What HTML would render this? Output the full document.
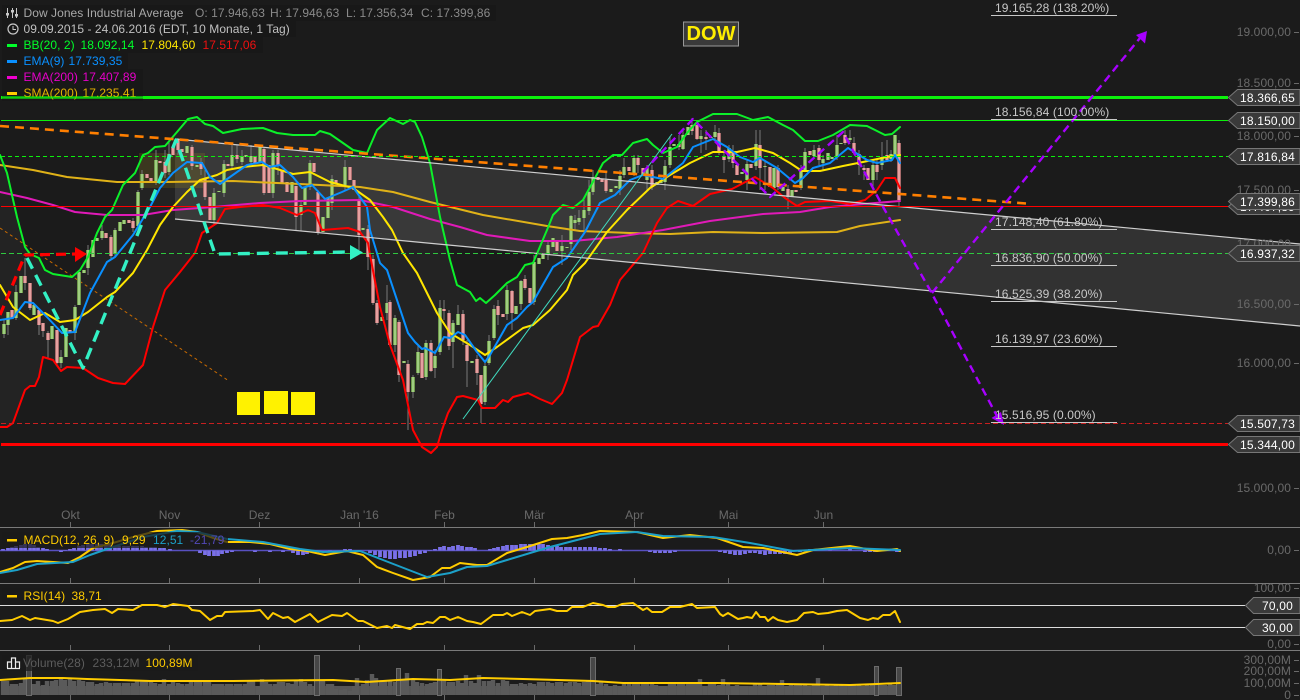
<!DOCTYPE html>
<html><head><meta charset="utf-8"><style>
html,body{margin:0;padding:0;background:#1b1b1b;width:1300px;height:700px;overflow:hidden}
svg{display:block}
text{font-family:"Liberation Sans",sans-serif;font-size:12px;letter-spacing:.05px}
.ax{fill:#6a6a6a;text-anchor:end;letter-spacing:.1px}
.dt{fill:#6a6a6a;text-anchor:middle}
.fb{fill:#c8c8c8;letter-spacing:.12px}
.lb{fill:#fff;letter-spacing:.18px}
.box{fill:#3a3a3a;stroke:#777;stroke-width:1}
.ln{fill:none;stroke-linejoin:round;stroke-linecap:round}
</style></head><body>
<svg width="1300" height="700" viewBox="0 0 1300 700" xmlns="http://www.w3.org/2000/svg">
<rect width="1300" height="700" fill="#1b1b1b"/>
<defs>
<path id="gc" d="M4 324V334M8 312V325M16 292V318M21 276V293M34 305V315M52 326V339M61 357V363M66 328V357M75 307V333M79 272V305M84 270V273M88 250V268M93 240V257M97 238V241M102 231V238M115 230V253M120 222V231M124 220V224M138 192V226M142 174V188M156 160V182M169 154V172M187 146V153M197 165V167M214 193V220M219 191V192M224 164V193M232 155V166M242 156V162M246 155V157M251 156V162M260 147V162M273 153V193M292 182V193M301 205V215M305 187V205M310 163V187M323 217V232M328 198V218M332 179V203M345 167V185M363 228V230M382 317V321M387 303V313M395 318V345M404 361V363M413 377V392M418 352V373M426 343V377M435 356V368M440 308V352M453 323V342M458 314V325M472 361V363M485 366V402M489 341V363M494 309V338M507 290V314M516 306V314M521 281V304M534 262V302M539 258V264M543 254V259M548 245V253M553 238V247M562 246V251M567 247V248M571 216V244M575 220V223M579 218V222M584 210V218M589 192V211M593 177V192M611 189V192M616 186V188M620 176V189M624 167V175M634 158V173M647 168V180M657 182V185M661 180V183M665 166V182M670 147V165M674 144V146M683 135V149M688 127V135M701 136V139M711 137V138M715 132V137M729 148V159M742 172V174M747 164V180M756 144V166M765 166V167M774 168V188M783 187V191M792 190V197M801 170V188M805 152V170M814 150V156M823 159V163M828 153V160M832 157V159M837 145V157M841 143V144M850 138V140M873 165V180M882 157V165M891 154V159M895 135V155"/>
<path id="rc" d="M12 310V318M25 276V283M30 283V308M39 310V325M43 323V331M48 333V340M57 330V363M70 330V333M106 233V238M111 237V256M129 220V223M133 221V228M147 174V178M151 178V183M160 161V163M165 162V173M173 147V155M178 140V150M182 149V152M192 147V166M201 162V169M205 178V197M210 197V220M228 164V166M237 155V159M255 157V163M264 149V193M269 165V193M278 153V165M282 170V183M287 182V192M296 186V217M314 163V172M318 192V233M336 180V184M350 167V180M354 180V190M359 200V235M368 229V257M373 259V303M377 303V323M390 302V345M399 322V375M408 364V392M422 353V378M431 343V371M444 309V311M449 313V346M463 314V340M467 345V361M477 359V373M481 375V404M498 306V315M503 314V317M512 291V313M525 279V288M530 288V303M557 240V251M598 177V180M602 179V182M606 180V191M629 167V171M638 158V165M643 168V175M652 170V187M679 144V147M692 125V131M697 125V139M706 137V139M719 133V153M724 157V160M733 152V163M737 165V175M751 164V168M760 145V168M770 167V187M778 168V187M788 189V197M796 190V192M810 151V155M819 148V160M845 135V143M854 143V153M859 154V165M864 168V170M868 168V180M877 165V172M887 155V160M899 143V200"/>
</defs>

<!-- Bollinger fill -->
<polygon fill="#232323" points="0,155 7,173 17,217 25,247 30,254 39,258 45,270 53,274 72,277 80,270 88,257 97,233 105,217 112,210 123,185 135,173 143,155 148,153 155,147 165,146 177,132 188,119 197,117 205,124 213,126 223,133 242,129 263,128 277,133 293,135 315,135 320,131 330,134 343,143 353,150 367,153 377,130 390,118 403,124 410,120 415,122 422,137 430,163 440,217 450,260 457,285 470,292 476,301 480,298 486,303 495,295 507,283 517,277 525,265 533,263 547,230 553,215 563,205 573,208 583,200 595,178 603,163 613,155 622,155 633,143 647,139 653,145 663,153 677,147 687,133 697,122 713,114 737,114 753,120 768,117 783,125 793,130 805,141 818,141 833,135 850,125 867,126 885,135 892,134 900,127 900,188 895,178 885,178 877,190 865,200 850,204 830,201 805,202 797,206 785,198 773,188 755,177 732,189 710,194 693,206 678,201 667,208 657,223 643,253 620,280 610,305 598,326 593,327 580,337 567,380 562,393 552,404 540,399 528,393 513,397 508,402 503,400 495,408 482,408 478,400 463,396 457,397 448,413 442,430 437,447 431,453 422,447 413,430 403,380 390,345 380,307 370,255 368,243 360,232 348,228 322,230 315,213 308,210 297,215 280,208 263,205 240,207 225,209 217,223 202,233 195,253 180,272 165,290 153,327 143,365 125,384 113,383 98,378 83,368 67,367 61,371 53,360 43,357 39,377 35,386 30,386 25,390 13,423 7,427 0,427"/>

<!-- channel -->
<polygon fill="#ffffff" fill-opacity="0.1" points="175,139 1300,244 1300,326 175,219"/>
<rect x="139" y="153" width="66" height="35" fill="#ffdc00" fill-opacity="0.11"/>

<!-- thin orange -->
<line x1="0" y1="228" x2="229" y2="381" stroke="#c86a00" stroke-width="1" stroke-dasharray="3 3"/>

<!-- wicks -->
<path fill="none" stroke="#7a7a7a" stroke-width="1" d="M4 320V338M8 312V335M16 285V320M25 258V290M30 283V310M39 310V335M43 323V337M48 331V358M57 330V365M61 350V368M75 305V340M88 245V275M102 225V240M111 235V260M115 228V258M133 218V232M138 190V228M142 170V190M156 150V185M165 150V178M169 140V175M178 138V155M192 145V170M201 158V175M205 170V200M214 188V225M224 160V197M232 145V170M237 145V163M242 150V165M251 145V165M264 147V195M273 150V198M278 150V175M296 186V231M301 200V231M310 160V190M318 190V235M332 175V210M345 160V190M359 195V250M368 225V270M373 255V305M377 300V325M387 285V320M390 300V346M395 315V352M399 320V382M408 360V430M413 375V398M418 345V375M426 340V380M431 340V372M435 350V378M440 300V355M444 300V320M449 310V350M453 320V368M458 305V325M463 310V345M467 340V387M477 355V385M481 375V423M485 360V405M489 335V365M494 305V340M498 300V325M507 285V320M512 290V330M521 280V310M525 275V290M534 255V305M548 240V260M562 235V265M571 215V250M575 215V230M579 210V225M584 200V230M589 180V215M593 170V195M606 172V193M620 170V195M624 158V178M634 155V176M638 155V173M647 165V190M652 165V190M665 160V190M670 136V168M679 135V150M683 128V150M692 118V135M697 120V140M701 130V153M706 130V150M715 125V140M719 128V155M724 150V173M729 145V162M733 145V168M747 160V190M756 130V170M760 130V190M765 160V190M778 165V190M788 185V209M801 165V190M805 148V172M814 145V158M819 145V165M823 155V170M837 135V160M845 130V145M850 130V142M854 137V155M859 150V175M864 165V180M873 160V190M877 160V180M882 142V170M887 140V162M891 150V162M899 140V206"/>
<!-- candles -->
<use href="#gc" fill="none" stroke="#6f9a4c" stroke-width="4"/>
<use href="#gc" fill="none" stroke="#9fce80" stroke-width="2"/>
<use href="#rc" fill="none" stroke="#a96c6c" stroke-width="4"/>
<use href="#rc" fill="none" stroke="#e6a0a0" stroke-width="2"/>

<!-- SMA200 gold -->
<polyline class="ln" stroke="#e0b218" stroke-width="2" points="0,165 33,170 67,177 117,182 167,182 233,181 300,184 360,187 393,192 430,202 483,215 547,226 580,231 630,233 670,234 713,232 763,233 837,232 860,226 900,220"/>
<!-- EMA200 magenta -->
<polyline class="ln" stroke="#e01ab8" stroke-width="2" points="0,192 27,198 53,205 75,212 107,215 143,215 173,210 213,207 260,203 300,201 360,200 393,207 430,219 460,227 487,235 530,241 573,241 617,237 663,230 710,221 763,214 800,212 830,207 863,204 900,201"/>
<!-- Upper BB -->
<polyline class="ln" stroke="#0cf02a" stroke-width="2" points="0,155 7,173 17,217 25,247 30,254 39,258 45,270 53,274 72,277 80,270 88,257 97,233 105,217 112,210 123,185 135,173 143,155 148,153 155,147 165,146 177,132 188,119 197,117 205,124 213,126 223,133 242,129 263,128 277,133 293,135 315,135 320,131 330,134 343,143 353,150 367,153 377,130 390,118 403,124 410,120 415,122 422,137 430,163 440,217 450,260 457,285 470,292 476,301 480,298 486,303 495,295 507,283 517,277 525,265 533,263 547,230 553,215 563,205 573,208 583,200 595,178 603,163 613,155 622,155 633,143 647,139 653,145 663,153 677,147 687,133 697,122 713,114 737,114 753,120 768,117 783,125 793,130 805,141 818,141 833,135 850,125 867,126 885,135 892,134 900,127"/>
<!-- Lower BB -->
<polyline class="ln" stroke="#ff0000" stroke-width="2" points="0,427 7,427 13,423 25,390 30,386 35,386 39,377 43,357 53,360 61,371 67,367 83,368 98,378 113,383 125,384 143,365 153,327 165,290 180,272 195,253 202,233 217,223 225,209 240,207 263,205 280,208 297,215 308,210 315,213 322,230 348,228 360,232 368,243 370,255 380,307 390,345 403,380 413,430 422,447 431,453 437,447 442,430 448,413 457,397 463,396 478,400 482,408 495,408 503,400 508,402 513,397 528,393 540,399 552,404 562,393 567,380 580,337 593,327 598,326 610,305 620,280 643,253 657,223 667,208 678,201 693,206 710,194 732,189 755,177 773,188 785,198 797,206 805,202 830,201 850,204 865,200 877,190 885,178 895,178 900,188"/>
<!-- Middle BB -->
<polyline class="ln" stroke="#ffe600" stroke-width="2" points="0,285 13,307 30,320 45,313 60,322 75,320 88,312 107,297 115,292 133,273 147,250 160,225 173,207 187,192 200,180 217,175 227,170 243,167 263,165 277,169 293,174 310,172 330,182 353,188 370,200 383,217 392,230 403,253 417,273 437,313 450,333 470,345 485,355 497,347 523,328 533,325 550,310 567,290 573,275 585,263 607,232 627,210 650,188 670,175 690,163 713,152 737,152 755,148 773,153 790,163 802,171 820,171 843,166 863,162 887,157 900,155"/>
<!-- EMA9 -->
<polyline class="ln" stroke="#0a90ff" stroke-width="2" points="0,320 13,318 25,302 33,303 47,317 62,333 75,332 90,293 107,262 115,257 133,235 150,207 160,188 173,173 187,162 202,163 210,177 220,184 230,177 247,165 262,162 270,167 280,165 293,177 302,188 312,185 325,199 342,192 353,187 367,207 370,230 380,263 387,270 397,300 408,333 415,342 422,349 425,348 435,353 444,337 450,338 458,332 465,335 477,352 485,362 490,355 507,325 517,318 527,307 533,302 553,267 567,258 585,232 600,203 615,195 630,180 643,175 663,179 683,163 693,147 713,139 727,147 740,157 753,162 760,158 777,168 795,183 803,178 813,168 830,163 848,148 867,160 877,163 892,160 895,155 900,163"/>

<!-- channel edges -->
<line x1="175" y1="139" x2="1300" y2="244" stroke="#cfcfcf" stroke-width="1.2"/>
<line x1="175" y1="219" x2="1300" y2="326" stroke="#cfcfcf" stroke-width="1.2"/>

<!-- orange trend -->
<line x1="0" y1="126" x2="1026" y2="203.5" stroke="#ff7f00" stroke-width="2.6" stroke-dasharray="9 6"/>

<!-- horizontal levels -->
<line x1="1" y1="97.5" x2="1228" y2="97.5" stroke="#0cf00c" stroke-width="3"/>
<line x1="1" y1="120.5" x2="1228" y2="120.5" stroke="#0cf00c" stroke-width="1"/>
<line x1="1" y1="156.5" x2="1228" y2="156.5" stroke="#0cf00c" stroke-width="1" stroke-dasharray="4 3"/>
<line x1="1" y1="206.5" x2="1228" y2="206.5" stroke="#f00" stroke-width="1"/>
<line x1="1" y1="253.5" x2="1228" y2="253.5" stroke="#2fc83f" stroke-width="1" stroke-dasharray="5 3"/>
<line x1="1" y1="423.5" x2="1228" y2="423.5" stroke="#c82020" stroke-width="1" stroke-dasharray="5 3"/>
<line x1="1" y1="444.5" x2="1228" y2="444.5" stroke="#f00" stroke-width="3"/>

<!-- thin teal -->
<line x1="463" y1="419" x2="672" y2="134" stroke="#40dcc0" stroke-width="1"/>

<!-- red dashed arrow -->
<polyline class="ln" style="stroke-linecap:butt" stroke="#ff0000" stroke-width="3.2" stroke-dasharray="10 6" points="0,315 25,255 76,254"/>
<polygon fill="#ff0000" points="75,247 87,254 75,262"/>
<!-- teal dashed -->
<polyline class="ln" style="stroke-linecap:butt" stroke="#33f0c4" stroke-width="3.4" stroke-dasharray="12 7" points="27,258 83,368 176,140 215,254 352,252"/>
<polygon fill="#33f0c4" points="350,245 363,252.5 350,260"/>

<!-- purple -->
<polyline class="ln" style="stroke-linecap:butt" stroke="#a800ff" stroke-width="2.4" stroke-dasharray="8 5" points="643,172 693,119 770,197 843,132 882,205 930,290 998,418"/>
<polyline class="ln" style="stroke-linecap:butt" stroke="#a800ff" stroke-width="2.4" stroke-dasharray="8 5" points="932,293 1140,38"/>
<polygon fill="#a800ff" points="1147,31 1145,43.5 1136,35"/>
<polygon fill="#a800ff" points="991.5,418 1001,412 1004,425"/>

<!-- yellow squares -->
<rect x="237" y="392" width="23" height="23" fill="#fff200"/>
<rect x="264" y="391" width="24" height="23" fill="#fff200"/>
<rect x="291" y="392" width="24" height="23" fill="#fff200"/>

<!-- DOW -->
<rect x="683.5" y="22" width="55" height="24" fill="#3a3a3a" stroke="#999"/>
<text x="711" y="40" text-anchor="middle" style="font-size:20px;font-weight:bold" fill="#ffee00">DOW</text>

<!-- fib labels -->
<g stroke="#c8c8c8" stroke-width="1">
<line x1="991" y1="15.5" x2="1117" y2="15.5"/><line x1="991" y1="119.5" x2="1117" y2="119.5"/><line x1="991" y1="229.5" x2="1117" y2="229.5"/><line x1="991" y1="265.5" x2="1117" y2="265.5"/><line x1="991" y1="301.5" x2="1117" y2="301.5"/><line x1="991" y1="346.5" x2="1117" y2="346.5"/><line x1="991" y1="422.5" x2="1117" y2="422.5"/>
</g>
<text class="fb" x="995" y="12">19.165,28 (138.20%)</text>
<text class="fb" x="995" y="116">18.156,84 (100.00%)</text>
<text class="fb" x="995" y="226">17.148,40 (61.80%)</text>
<text class="fb" x="995" y="262">16.836,90 (50.00%)</text>
<text class="fb" x="995" y="298">16.525,39 (38.20%)</text>
<text class="fb" x="995" y="343">16.139,97 (23.60%)</text>
<text class="fb" x="995" y="419">15.516,95 (0.00%)</text>

<!-- y axis main -->
<text class="ax" x="1291" y="36">19.000,00</text>
<text class="ax" x="1291" y="87">18.500,00</text>
<text class="ax" x="1291" y="140">18.000,00</text>
<text class="ax" x="1291" y="194">17.500,00</text>
<text class="ax" x="1291" y="248">17.000,00</text>
<text class="ax" x="1291" y="308">16.500,00</text>
<text class="ax" x="1291" y="367">16.000,00</text>
<text class="ax" x="1291" y="492">15.000,00</text>
<path stroke="#6a6a6a" d="M1294 32.5H1299M1294 83.5H1299M1294 136.5H1299M1294 190.5H1299M1294 304.5H1299M1294 363.5H1299M1294 488.5H1299M1294 550.5H1299M1294 588.5H1299M1294 644.5H1299M1294 660.5H1299M1294 671.5H1299M1294 683.5H1299M1294 695.5H1299"/>

<!-- price labels -->
<polygon class="box" points="1228.5,97.5 1237.5,89.5 1300,89.5 1300,105.5 1237.5,105.5"/><text class="lb" x="1240" y="102">18.366,65</text>
<polygon class="box" points="1228.5,120.5 1237.5,112.5 1300,112.5 1300,128.5 1237.5,128.5"/><text class="lb" x="1240" y="125">18.150,00</text>
<polygon class="box" points="1228.5,156.5 1237.5,148.5 1300,148.5 1300,164.5 1237.5,164.5"/><text class="lb" x="1240" y="161">17.816,84</text>
<polygon class="box" points="1228.5,206.5 1237.5,198.5 1300,198.5 1300,214.5 1237.5,214.5"/><text class="lb" x="1240" y="211">17.407,89</text>
<polygon class="box" points="1228.5,201.5 1237.5,193.5 1300,193.5 1300,209.5 1237.5,209.5"/><text class="lb" x="1240" y="206">17.399,86</text>
<polygon class="box" points="1228.5,253.5 1237.5,245.5 1300,245.5 1300,261.5 1237.5,261.5"/><text class="lb" x="1240" y="258">16.937,32</text>
<polygon class="box" points="1228.5,423.5 1237.5,415.5 1300,415.5 1300,431.5 1237.5,431.5"/><text class="lb" x="1240" y="428">15.507,73</text>
<polygon class="box" points="1228.5,444.5 1237.5,436.5 1300,436.5 1300,452.5 1237.5,452.5"/><text class="lb" x="1240" y="449">15.344,00</text>

<!-- legend backgrounds -->
<g fill="#181818" fill-opacity="0.6">
<rect x="2" y="5" width="494" height="16"/><rect x="2" y="21" width="294" height="16"/><rect x="2" y="37" width="261" height="16"/><rect x="2" y="53" width="126" height="16"/><rect x="2" y="69" width="141" height="16"/><rect x="2" y="85" width="141" height="16"/>
</g>
<!-- legend icons -->
<g stroke="#c8c8c8" stroke-width="1" fill="none">
<path d="M7.5 8V18M12.5 8V18M16.5 8V18"/>
<path stroke="none" fill="#c8c8c8" d="M6 13h3v2.5h-3zM11 10h3v2.5h-3zM15 14h3v2.5h-3z"/>
<circle cx="13" cy="29" r="5" stroke-width="1.2"/><path d="M13 26V29.5H16"/>
</g>
<rect x="7" y="44" width="10" height="3" fill="#00ff2a"/>
<rect x="7" y="60" width="10" height="3" fill="#0a90ff"/>
<rect x="7" y="76" width="10" height="3" fill="#f000d0"/>
<rect x="7" y="92" width="10" height="3" fill="#ffcc00"/>
<text x="23.5" y="17" fill="#a8a8a8">Dow Jones Industrial Average</text>
<text x="195" y="17" fill="#8a8a8a">O: 17.946,63</text>
<text x="270" y="17" fill="#8a8a8a">H: 17.946,63</text>
<text x="346" y="17" fill="#8a8a8a">L: 17.356,34</text>
<text x="421" y="17" fill="#8a8a8a">C: 17.399,86</text>
<text x="23.5" y="33" fill="#c0c0c0">09.09.2015 - 24.06.2016 (EDT, 10 Monate, 1 Tag)</text>
<text x="23.5" y="49" fill="#00ff2a">BB(20, 2)</text>
<text x="80.5" y="49" fill="#00ff2a">18.092,14</text>
<text x="141.5" y="49" fill="#ffe600">17.804,60</text>
<text x="202.5" y="49" fill="#f01010">17.517,06</text>
<text x="23.5" y="65" fill="#0a90ff">EMA(9)</text>
<text x="68.5" y="65" fill="#0a90ff">17.739,35</text>
<text x="23.5" y="81" fill="#e600c8">EMA(200)</text>
<text x="82.5" y="81" fill="#e600c8">17.407,89</text>
<text x="23.5" y="97" fill="#e6b400">SMA(200)</text>
<text x="82.5" y="97" fill="#e6b400">17.235,41</text>
<line x1="1" y1="97.5" x2="143" y2="97.5" stroke="#0cf00c" stroke-width="2" stroke-opacity="0.75"/>

<!-- x axis -->
<text class="dt" x="70.5" y="519">Okt</text>
<text class="dt" x="169.5" y="519">Nov</text>
<text class="dt" x="259.5" y="519">Dez</text>
<text class="dt" x="359.5" y="519">Jan '16</text>
<text class="dt" x="444.5" y="519">Feb</text>
<text class="dt" x="534.5" y="519">Mär</text>
<text class="dt" x="634.5" y="519">Apr</text>
<text class="dt" x="728.5" y="519">Mai</text>
<text class="dt" x="823.5" y="519">Jun</text>
<path stroke="#6a6a6a" d="M70.5 522V527M169.5 522V527M259.5 522V527M359.5 522V527M444.5 522V527M534.5 522V527M634.5 522V527M728.5 522V527M823.5 522V527M70.5 578V583M169.5 578V583M259.5 578V583M359.5 578V583M444.5 578V583M534.5 578V583M634.5 578V583M728.5 578V583M823.5 578V583M70.5 645V650M169.5 645V650M259.5 645V650M359.5 645V650M444.5 645V650M534.5 645V650M634.5 645V650M728.5 645V650M823.5 645V650M70.5 695V700M169.5 695V700M259.5 695V700M359.5 695V700M444.5 695V700M534.5 695V700M634.5 695V700M728.5 695V700M823.5 695V700"/>
<!-- separators -->
<g stroke="#7a7a7a" stroke-width="1">
<line x1="0" y1="527.5" x2="1300" y2="527.5"/><line x1="0" y1="583.5" x2="1300" y2="583.5"/><line x1="0" y1="650.5" x2="1300" y2="650.5"/>
</g>

<!-- MACD -->
<line x1="0" y1="550.5" x2="900" y2="550.5" stroke="#5850c0" stroke-width="1.5"/>
<path fill="none" stroke="#7a70e8" stroke-width="3.8" d="M3 550.5V549M8 550.5V548M12 550.5V547M16 550.5V546M21 550.5V545M25 550.5V544M30 550.5V544M34 550.5V545M38 550.5V547M43 550.5V548M47 550.5V549M61 550.5V552M65 550.5V551M70 550.5V549M74 550.5V548M79 550.5V546M83 550.5V545M88 550.5V544M92 550.5V544M97 550.5V544M101 550.5V544M106 550.5V545M110 550.5V545M115 550.5V546M119 550.5V546M124 550.5V546M128 550.5V546M133 550.5V546M137 550.5V546M142 550.5V546M146 550.5V547M151 550.5V547M155 550.5V547M160 550.5V548M164 550.5V548M170 550.5V549M200 550.5V553M205 550.5V555M209 550.5V556M214 550.5V556M218 550.5V556M222 550.5V554M227 550.5V553M232 550.5V552M255 550.5V552M270 550.5V552M283 550.5V552M293 550.5V553M298 550.5V555M303 550.5V555M307 550.5V554M312 550.5V552M330 550.5V551M345 550.5V549M350 550.5V549M370 550.5V553M375 550.5V555M380 550.5V557M385 550.5V558M390 550.5V559M395 550.5V559M400 550.5V558M405 550.5V558M410 550.5V557M415 550.5V556M420 550.5V554M425 550.5V553M430 550.5V551M435 550.5V549M440 550.5V547M444 550.5V546M449 550.5V547M453 550.5V546M458 550.5V545M462 550.5V546M467 550.5V547M471 550.5V547M475 550.5V548M490 550.5V549M494 550.5V548M498 550.5V547M503 550.5V546M507 550.5V545M512 550.5V545M516 550.5V545M521 550.5V544M525 550.5V544M530 550.5V544M534 550.5V544M539 550.5V544M543 550.5V544M548 550.5V545M552 550.5V546M557 550.5V546M561 550.5V547M566 550.5V547M570 550.5V547M575 550.5V547M580 550.5V547M585 550.5V547M590 550.5V547M595 550.5V547M600 550.5V548M605 550.5V548M610 550.5V549M620 550.5V549M650 550.5V552M655 550.5V553M660 550.5V553M665 550.5V553M670 550.5V553M675 550.5V552M720 550.5V552M725 550.5V553M730 550.5V554M735 550.5V555M740 550.5V555M745 550.5V554M750 550.5V553M755 550.5V553M760 550.5V554M765 550.5V555M770 550.5V554M775 550.5V554M780 550.5V554M785 550.5V554M790 550.5V553M800 550.5V552M810 550.5V549M830 550.5V549M850 550.5V549M865 550.5V552M870 550.5V552M875 550.5V552M897 550.5V552M899 550.5V552"/>
<polyline class="ln" stroke="#ffcc00" stroke-width="2" points="0,572 13,568 25,562 37,561 53,562 68,563 80,557 93,548 113,543 133,537 157,531 182,530 197,532 213,538 227,542 250,542 270,544 290,549 307,551 325,555 347,551 363,555 377,567 393,573 413,580 430,577 442,568 450,568 460,563 477,565 487,565 507,553 527,547 552,539 567,538 583,535 600,531 637,532 663,538 690,535 717,538 743,547 763,548 797,555 813,550 850,546 877,551 897,549 900,551"/>
<polyline class="ln" stroke="#1ca0c8" stroke-width="2" points="0,573 17,570 37,564 73,562 90,555 110,548 143,537 177,531 197,532 227,539 263,542 300,549 323,552 360,551 383,560 427,577 450,573 467,567 487,566 507,560 550,547 600,534 637,532 663,536 713,537 750,543 793,551 850,548 900,550"/>
<rect x="2" y="532" width="226" height="16" fill="#1a1a1a" fill-opacity="0.72"/>
<rect x="7" y="539" width="10" height="2.5" fill="#ffcc00"/>
<text x="23.5" y="544" fill="#ffcc00">MACD(12, 26, 9)</text>
<text x="122" y="544" fill="#ffcc00">9,29</text>
<text x="153" y="544" fill="#1ca0c8">12,51</text>
<text x="190" y="544" fill="#5248b8">-21,79</text>
<text class="ax" x="1291" y="554">0,00</text>

<!-- RSI -->
<line x1="0" y1="605.5" x2="1245" y2="605.5" stroke="#dcdcdc" stroke-width="1"/>
<line x1="0" y1="627.5" x2="1245" y2="627.5" stroke="#dcdcdc" stroke-width="1"/>
<polyline class="ln" stroke="#ffcc00" stroke-width="2" points="0,621 12,620 22,616 30,620 35,618 53,621 58,623 68,619 80,612 93,610 105,609 112,613 118,609 133,610 142,605 157,605 165,607 173,604 188,606 192,610 200,611 210,620 217,616 222,616 225,612 253,611 260,610 268,619 273,613 283,618 288,617 295,622 310,614 318,622 332,615 342,616 347,613 358,621 363,621 377,628 387,626 392,628 395,625 410,629 417,624 423,624 427,622 433,623 440,617 445,617 450,620 458,617 467,621 473,622 481,624 493,615 503,615 507,613 512,616 522,612 530,615 535,611 550,609 557,611 567,611 572,607 583,607 593,603 603,605 608,607 615,607 622,604 633,603 643,610 647,608 652,612 662,612 670,607 680,607 692,604 697,608 715,607 720,614 723,616 728,613 738,619 743,618 747,617 752,618 756,612 760,617 765,617 768,621 773,617 778,620 787,622 797,620 804,613 813,612 818,614 828,613 837,611 847,610 860,618 868,620 873,618 878,619 883,615 890,615 895,611 900,622"/>
<rect x="2" y="588" width="106" height="16" fill="#1a1a1a" fill-opacity="0.72"/>
<rect x="7" y="595" width="10" height="2.5" fill="#ffcc00"/>
<text x="23.5" y="600" fill="#ffcc00">RSI(14)</text>
<text x="71.5" y="600" fill="#ffcc00">38,71</text>
<text class="ax" x="1291" y="592">100,00</text>
<text class="ax" x="1291" y="648">0,00</text>
<polygon class="box" points="1245.5,605.5 1253.5,597.5 1300,597.5 1300,613.5 1253.5,613.5"/><text class="lb" x="1262" y="610">70,00</text>
<polygon class="box" points="1245.5,627.5 1253.5,619.5 1300,619.5 1300,635.5 1253.5,635.5"/><text class="lb" x="1262" y="632">30,00</text>

<!-- Volume -->
<rect x="1" y="686" width="900" height="9" fill="#565656"/>
<path fill="none" stroke="#5a5a5a" stroke-width="4.4" d="M3 695V681M7 695V681M12 695V684M16 695V684M21 695V683M25 695V678M34 695V684M38 695V681M43 695V685M47 695V681M52 695V681M56 695V680M61 695V679M65 695V680M70 695V679M74 695V681M79 695V680M83 695V681M88 695V682M92 695V682M97 695V684M101 695V683M106 695V682M110 695V683M115 695V683M119 695V683M124 695V683M128 695V683M133 695V683M137 695V680M142 695V680M146 695V681M151 695V682M155 695V683M160 695V684M164 695V679M169 695V684M173 695V682M178 695V683M182 695V684M187 695V684M191 695V681M196 695V680M200 695V680M205 695V680M209 695V680M214 695V684M218 695V684M222 695V684M227 695V684M231 695V684M236 695V684M240 695V684M245 695V684M249 695V681M253 695V680M258 695V686M262 695V679M266 695V682M270 695V684M275 695V684M279 695V682M283 695V682M288 695V683M292 695V684M296 695V680M301 695V679M305 695V682M310 695V684M319 695V680M323 695V680M328 695V684M332 695V684M336 695V689M341 695V690M345 695V689M350 695V691M354 695V686M357 695V678M363 695V684M367 695V680M372 695V674M376 695V678M381 695V682M385 695V681M390 695V680M395 695V682M403 695V680M407 695V673M413 695V680M417 695V682M422 695V683M427 695V684M431 695V683M435 695V682M444 695V680M449 695V682M453 695V682M458 695V681M462 695V683M466 695V675M471 695V681M475 695V683M479 695V675M484 695V681M489 695V681M493 695V680M498 695V683M503 695V680M507 695V681M512 695V684M516 695V684M521 695V683M525 695V684M530 695V683M534 695V684M539 695V682M543 695V682M548 695V682M552 695V683M557 695V682M561 695V682M566 695V683M570 695V682M575 695V682M579 695V683M584 695V682M588 695V681M597 695V684M601 695V682M606 695V684M610 695V686M615 695V685M620 695V686M624 695V684M629 695V683M634 695V683M638 695V684M643 695V683M647 695V684M652 695V684M656 695V685M661 695V686M665 695V686M670 695V684M674 695V684M679 695V682M683 695V683M688 695V684M692 695V684M696 695V684M700 695V679M705 695V686M710 695V684M714 695V684M719 695V685M723 695V679M728 695V684M733 695V686M737 695V685M742 695V686M746 695V686M751 695V687M755 695V684M760 695V684M764 695V686M769 695V685M773 695V685M778 695V684M782 695V680M787 695V686M791 695V684M796 695V684M800 695V684M805 695V685M809 695V686M814 695V685M818 695V678M823 695V686M827 695V684M832 695V686M836 695V685M841 695V685M845 695V686M850 695V685M854 695V685M859 695V685M863 695V686M867 695V685M872 695V684M881 695V685M885 695V685M890 695V684M894 695V685"/>
<g fill="#474747" stroke="#6c6c6c" stroke-width="1">
<rect x="26.5" y="655.5" width="5" height="40"/><rect x="314.5" y="655.5" width="5" height="40"/><rect x="590.5" y="657.5" width="5" height="38"/><rect x="874.5" y="666.5" width="4" height="29"/><rect x="896.5" y="667.5" width="5" height="28"/><rect x="396.5" y="668.5" width="4" height="27"/><rect x="437.5" y="669.5" width="4" height="26"/>
</g>
<polyline class="ln" stroke="#ffcc00" stroke-width="2" points="0,680 30,678 63,678 87,679 150,681 233,681 333,680 367,682 413,679 450,680 483,678 523,679 593,681 623,683 717,683 783,684 850,685 877,684 900,683"/>
<rect x="2" y="655" width="196" height="16" fill="#1a1a1a" fill-opacity="0.72"/>
<path fill="none" stroke="#eee" stroke-width="1.2" d="M7.5 668V662H11.5V668M11.5 668V658H15.5V668M15.5 668V662H19.5V668M7 668.5H20"/>
<text x="23" y="667" fill="#5c5c5c">Volume(28)</text>
<text x="92.5" y="667" fill="#5c5c5c">233,12M</text>
<text x="145.5" y="667" fill="#ffcc00">100,89M</text>
<text class="ax" x="1291" y="664">300,00M</text>
<text class="ax" x="1291" y="675">200,00M</text>
<text class="ax" x="1291" y="687">100,00M</text>
<text class="ax" x="1291" y="699">0</text>
</svg>
</body></html>
